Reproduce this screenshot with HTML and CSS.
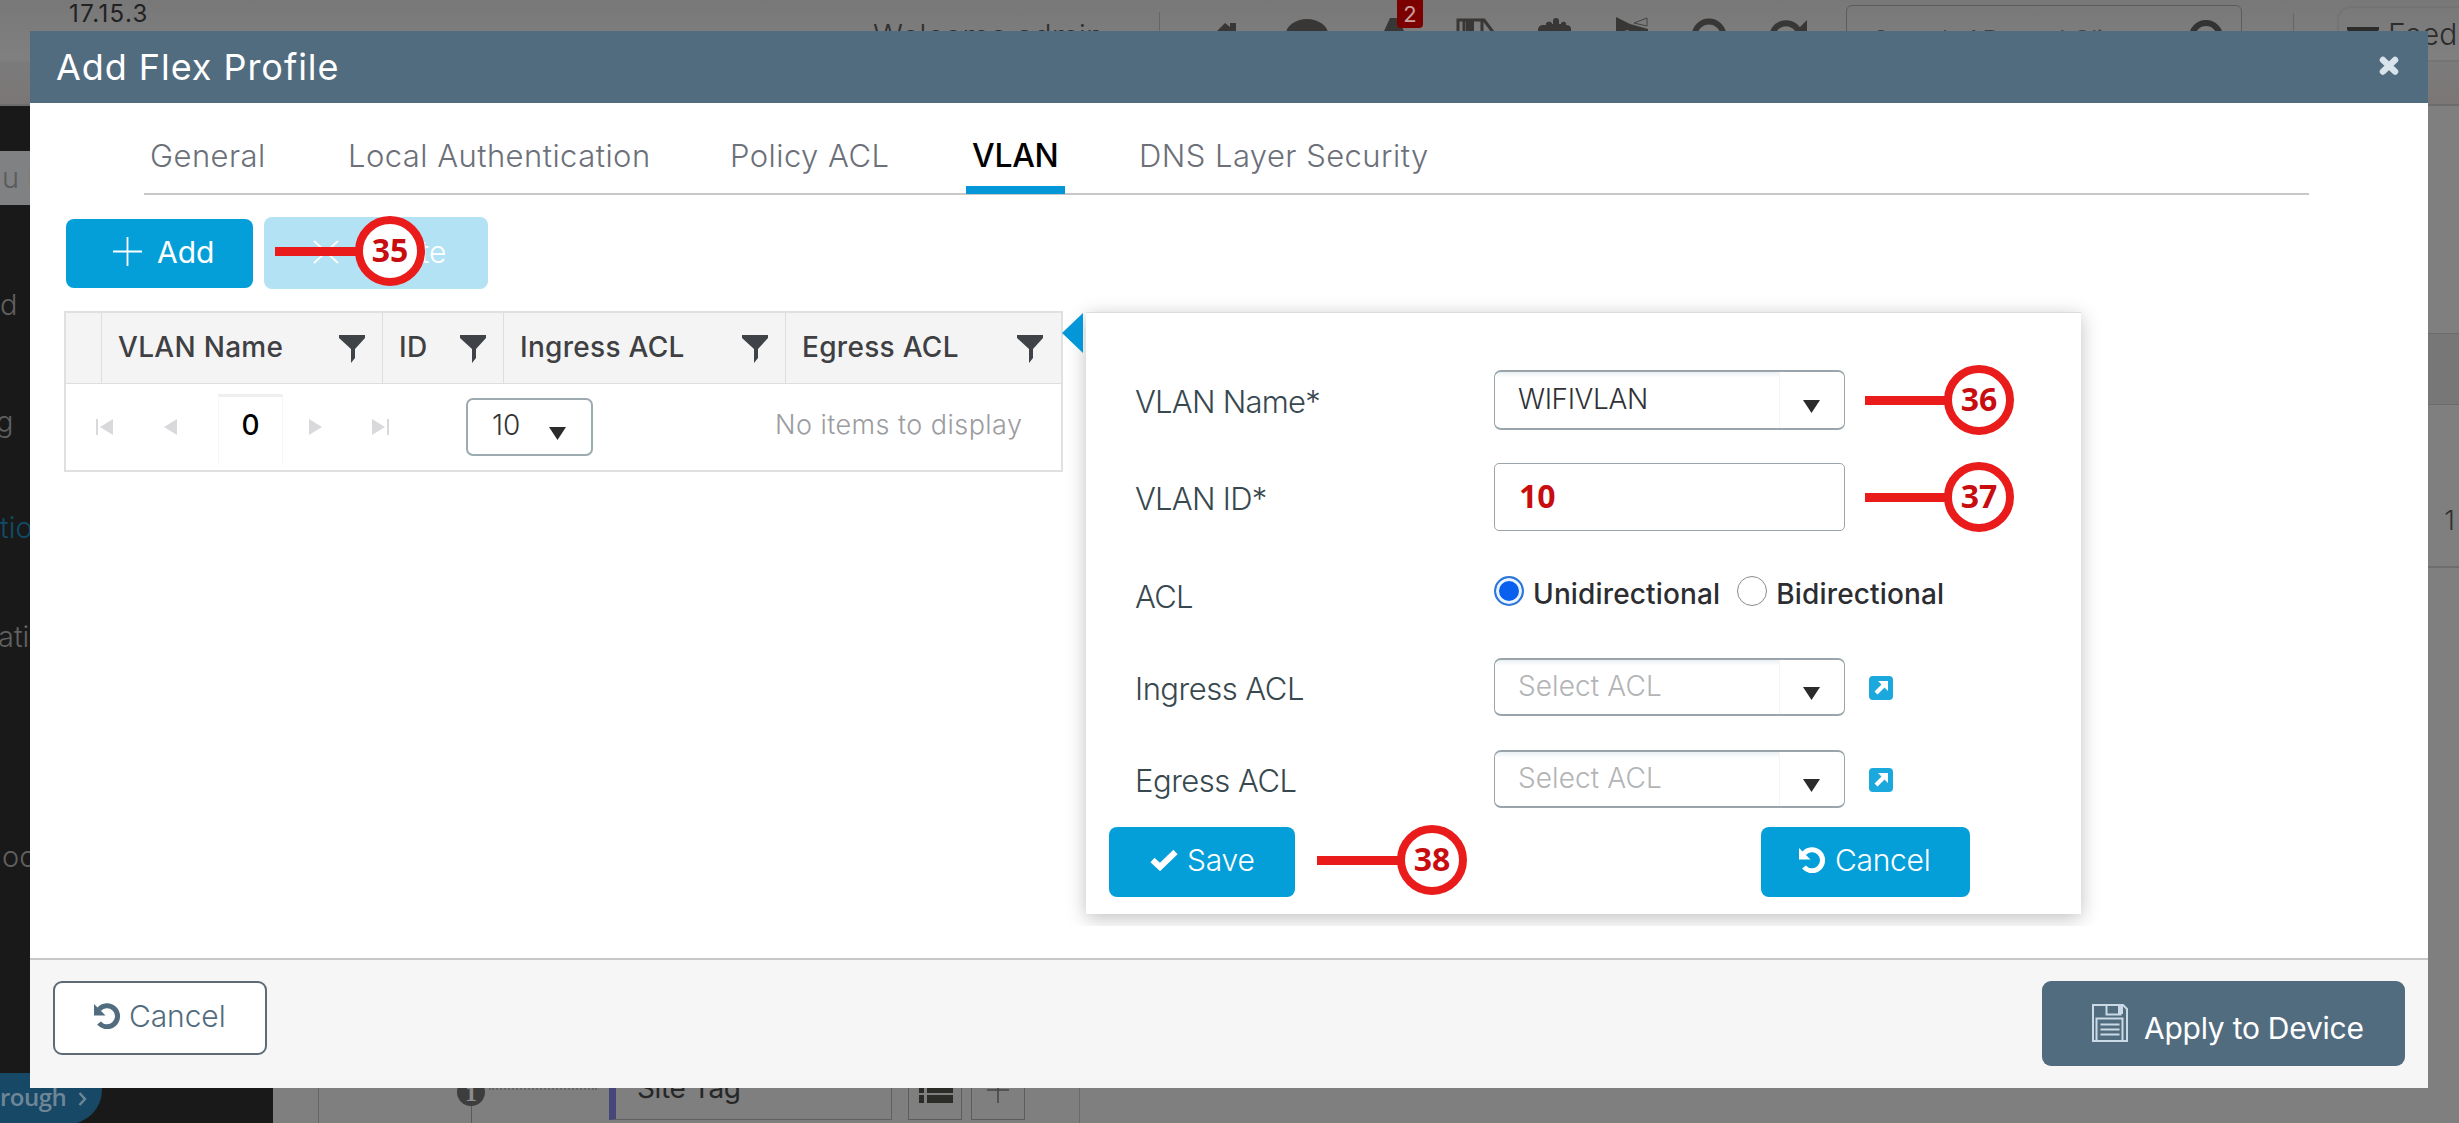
FILE: index.html
```html
<!DOCTYPE html>
<html lang="en">
<head>
<meta charset="utf-8">
<title>Add Flex Profile</title>
<link rel="stylesheet" href="styles.css">
</head>
<body>
<svg class="defs" width="0" height="0">
  <symbol id="funnel" viewBox="0 0 26 28"><path d="M0 0h26v3L16 14v9l-4 5V14L0 3z"/></symbol>
  <symbol id="undo" viewBox="0 0 27 26"><path d="M5 6.5A10.5 10.5 0 1 1 5 20" fill="none" stroke="currentColor" stroke-width="5"/><path d="M0 1v11.500h11.500z" fill="currentColor"/></symbol>
  <symbol id="external" viewBox="0 0 24 24"><rect width="24" height="24" rx="4" fill="#1ba8dc"/><path d="M9 5h10v10l-3.500-3.500-7 7-3-3 7-7z" fill="#fff"/></symbol>
</svg>

<div class="app">
  <header class="topbar">
    <span class="version">17.15.3</span>
    <span class="welcome">Welcome admin</span>
    <svg class="tools" width="620" height="62" viewBox="0 0 620 62">
      <g fill="#383735">
        <path d="M20 38l15-15 5 4v-4h6v15h-5l-6-7-9 7z"/>
        <ellipse cx="117" cy="34" rx="21" ry="15"/>
        <path d="M190 40l10-22h8l10 22z"/>
        <path d="M348 34v-5q1-4 5-4h3v-2q3-3 6 0v1h1v-3q0-3 3-3t3 3v3h2v-1q3-3 5 0v2q5 0 5 4v6z"/>
        <path d="M426 17l14 7 18 5v6h-14l-6-5-12 3z"/>
      </g>
      <path d="M268 40V20h26l9 12M274 20v20M292 20v20" fill="none" stroke="#383735" stroke-width="3"/>
      <path d="M280 20v20" stroke="#383735" stroke-width="8"/>
      <path d="M457 18v8l-13-3z" fill="none" stroke="#444"/>
      <g fill="none" stroke="#383735" stroke-width="6"><circle cx="519" cy="36" r="14.500"/><path d="M582 38a14 14 0 0 1 26-8"/></g>
      <path d="M617 20v14h-14z" fill="#383735"/>
    </svg>
    <span class="notice">2</span>
    <div class="search"><span>Search APs and Clients</span>
      <svg width="36" height="36" viewBox="0 0 36 36"><circle cx="18" cy="18" r="14" fill="none" stroke="#333" stroke-width="6"/></svg>
    </div>
    <div class="feedback"><svg width="32" height="24" viewBox="0 0 32 24"><path d="M0 0h32v3L16 15 0 3z" fill="#2e2c2b"/></svg><span>Feedback</span></div>
  </header>
  <div class="shell">
    <aside class="sidebar">
      <div class="menu-search">u Items</div>
      <span class="item item-d">d</span>
      <span class="item item-g">g</span>
      <span class="item item-tic">tion</span>
      <span class="item item-ati">ation</span>
      <span class="item item-oo">oot</span>
      <span class="walk">rough<svg width="9" height="14" viewBox="0 0 9 14"><path d="M1.500 1l5.500 6-5.500 6" fill="none" stroke="#6f8697" stroke-width="2.500"/></svg></span>
    </aside>
    <main class="page">
      <div class="table-stub"><span class="band"></span><span class="count">1</span></div>
      <div class="flow">
        <div class="step"><b>1</b></div>
        <div class="tag">Site Tag</div>
        <div class="sq"><svg width="34" height="24" viewBox="0 0 34 24"><path d="M0 0h5v6H0zM8 0h26v6H8zM0 8h5v6H0zM8 8h26v6H8zM0 16h5v8H0zM8 16h26v8H8z" fill="#2b2b27"/></svg></div>
        <div class="sq thin"><svg width="22" height="24" viewBox="0 0 22 24"><path d="M0 11h22M11 0v24" stroke="#444" stroke-width="1.500"/></svg></div>
        <div class="edge"></div>
      </div>
    </main>
  </div>
</div>

<section class="modal">
  <header class="modal-head"><h1>Add Flex Profile</h1>
    <svg width="20" height="19" viewBox="0 0 20 19"><path d="M4 4l12 11.500M16 4L4 15.500" stroke="#d9e3ec" stroke-width="6.500" stroke-linecap="round"/></svg>
  </header>
  <div class="modal-body">
    <nav class="tabs">
      <a>General</a><a>Local Authentication</a><a>Policy ACL</a><a class="active">VLAN</a><a>DNS Layer Security</a>
    </nav>
    <div class="actions">
      <button class="btn add"><svg width="29" height="29" viewBox="0 0 29 29"><path d="M0 14.500h29M14.500 0v29" stroke="#fff" stroke-width="1.800"/></svg>Add</button>
      <button class="btn delete"><svg width="26" height="24" viewBox="0 0 26 24"><path d="M1 1l24 22M25 1L1 23" stroke="#fff" stroke-width="1.800"/></svg>Delete</button>
      <div class="callout c35"><i></i><b>35</b></div>
    </div>
    <div class="content">
      <div class="grid">
        <div class="grid-head">
          <div></div>
          <div>VLAN Name<svg width="26" height="28"><use href="#funnel"/></svg></div>
          <div>ID<svg width="26" height="28"><use href="#funnel"/></svg></div>
          <div>Ingress ACL<svg width="26" height="28"><use href="#funnel"/></svg></div>
          <div>Egress ACL<svg width="26" height="28"><use href="#funnel"/></svg></div>
        </div>
        <div class="pager">
          <svg class="first" width="18" height="16" viewBox="0 0 18 16"><path d="M0 0h2v16H0zM17 0v16L4 8z"/></svg>
          <svg class="prev" width="14" height="16" viewBox="0 0 14 16"><path d="M13 0v16L0 8z"/></svg>
          <span class="current">0</span>
          <svg class="next" width="14" height="16" viewBox="0 0 14 16"><path d="M1 0v16l13-8z"/></svg>
          <svg class="last" width="18" height="16" viewBox="0 0 18 16"><path d="M15 0h2v16h-2zM0 0v16l13-8z"/></svg>
          <div class="size">10<svg width="17" height="13" viewBox="0 0 17 13"><path d="M0 0h17l-8.500 13z"/></svg></div>
          <span class="empty">No items to display</span>
        </div>
      </div>
      <div class="panel">
        <div class="row r1"><label>VLAN Name*</label><div class="select">WIFIVLAN<svg width="17" height="13" viewBox="0 0 17 13"><path d="M0 0h17l-8.500 13z"/></svg></div>
          <div class="callout side"><i></i><b>36</b></div></div>
        <div class="row r2"><label>VLAN ID*</label><div class="input">10</div>
          <div class="callout side"><i></i><b>37</b></div></div>
        <div class="row r3"><label>ACL</label><div class="radios"><span class="radio on"></span><span class="opt">Unidirectional</span><span class="radio"></span><span class="opt">Bidirectional</span></div></div>
        <div class="row r4"><label>Ingress ACL</label><div class="select hint">Select ACL<svg width="17" height="13" viewBox="0 0 17 13"><path d="M0 0h17l-8.500 13z"/></svg></div><svg class="link" width="24" height="24"><use href="#external"/></svg></div>
        <div class="row r5"><label>Egress ACL</label><div class="select hint">Select ACL<svg width="17" height="13" viewBox="0 0 17 13"><path d="M0 0h17l-8.500 13z"/></svg></div><svg class="link" width="24" height="24"><use href="#external"/></svg></div>
        <div class="panel-actions">
          <button class="btn save"><svg width="28" height="22" viewBox="0 0 28 22"><path d="M2.500 11l7.500 7L25.500 3" fill="none" stroke="#fff" stroke-width="6"/></svg>Save</button>
          <div class="callout c38"><i></i><b>38</b></div>
          <button class="btn undo"><svg width="27" height="26"><use href="#undo"/></svg>Cancel</button>
        </div>
      </div>
    </div>
  </div>
  <footer class="modal-foot">
    <button class="cancel"><svg width="27" height="26"><use href="#undo"/></svg>Cancel</button>
    <button class="apply"><svg width="36" height="38" viewBox="0 0 36 38"><g fill="none" stroke="#c9d9e6" stroke-width="2"><path d="M1 1h30l4 4v32H1z"/><path d="M4.500 37V14.500h26V37"/><path d="M14.500 1v9.500h14V1"/><path d="M8.500 20.500h19M8.500 25.500h19M8.500 30.500h19"/></g><path d="M26 1h5v9h-5z" fill="#c9d9e6"/></svg>Apply to Device</button>
  </footer>
</section>
</body>
</html>
```
FILE: styles.css
```css
* { box-sizing: border-box; }
body { margin: 0; width: 2459px; height: 1123px; overflow: hidden; position: relative; font-family: Inter, "Liberation Sans", sans-serif; font-weight: 300; }
button { font: inherit; border: 0; padding: 0; margin: 0; }
.defs { position: absolute; }

/* dimmed application behind the dialog */
.app { height: 1123px; background: #7f7f7f; overflow: hidden; color: #303030; }
.topbar { height: 106px; display: flex; align-items: flex-start; background: linear-gradient(#787878, #808080 60px, #7b7b7b 62px, #7b7676); border-bottom: 2px solid #6c6c6c; white-space: nowrap; position: relative; }
.topbar > * { flex: none; }
.version { width: 873px; padding-left: 69px; font-size: 24px; line-height: 28px; letter-spacing: 1.4px; font-weight: 400; color: #222; }
.welcome { width: 287px; margin-top: 12px; height: 60px; border-right: 1px solid #666; font-size: 31px; line-height: 48px; font-weight: 300; }
.tools { margin-left: 30px; }
.notice { position: absolute; left: 1397px; top: 0; width: 26px; height: 28px; border-radius: 0 0 4px 4px; background: #7d0000; color: #c9a0a0; font-size: 22px; line-height: 28px; text-align: center; font-weight: 400; }
.search { margin: 5px 50px 0 36px; width: 396px; height: 60px; border: 1px solid #5c5c5c; border-radius: 6px; display: flex; justify-content: space-between; padding: 13px 17px 0 25px; font-size: 28px; line-height: 44px; letter-spacing: -1px; color: #404040; }
.feedback { border: 2px solid #747474; border-radius: 14px; width: 240px; margin: 6px 0 0 45px; height: 56px; padding: 0 8px; display: flex; align-items: center; gap: 9px; font-size: 30px; color: #2c2c2c; position: relative; }
.feedback svg { margin-top: 9px; }
.feedback::before { content: ""; position: absolute; left: -46px; top: 5px; width: 1px; height: 60px; background: #666; }
.shell { display: flex; height: 1017px; }
.sidebar { width: 273px; background: #191919; color: #606060; font-size: 29px; line-height: 40px; overflow: hidden; display: flex; flex-direction: column; align-items: flex-start; }
.menu-search { margin-top: 45px; width: 240px; height: 54px; line-height: 54px; background: #7f8182; color: #5b5b5b; padding-left: 2px; }
.item-d { margin-top: 80px; }
.item-g { margin: 77px 0 0 -4px; }
.item-tic { margin-top: 66px; color: #104c66; }
.item-ati { margin: 69px 0 0 -2px; }
.item-oo { margin: 180px 0 0 2px; }
.walk { margin-top: 196px; width: 102px; height: 51px; flex: none; border-radius: 0 0 34px 0; background: #174866; color: #6f8697; font-family: "Open Sans", sans-serif; font-weight: 600; font-size: 24px; line-height: 48px; letter-spacing: -.5px; white-space: nowrap; }
.walk svg { margin-left: 12px; }
.page { flex: 1; display: flex; flex-direction: column; }
.table-stub { height: 974px; padding-top: 227px; text-align: right; }
.band { display: block; height: 72px; background: #777; border: 1px solid #6b6b6b; border-width: 1px 0; }
.count { display: block; height: 163px; padding: 97px 4px 0; font-size: 27px; line-height: 38px; border-bottom: 2px solid #6e6e6e; }
.flow { display: flex; height: 43px; margin-left: 45px; border-left: 1px solid #666; }
.flow > * { flex: none; }
.step { width: 290px; background: linear-gradient(#5a5a5a, #5a5a5a) 152px 8px / 1px 40px no-repeat; position: relative; }
.step::after { content: ""; position: absolute; left: 170px; right: 12px; top: 8px; border-top: 2px dotted #666; }
.step b { display: block; width: 28px; height: 28px; margin: -2px 0 0 138px; border-radius: 50%; background: #3d3d3d; color: #8c8c8c; font: 700 24px/30px "Liberation Serif", serif; text-align: center; }
.tag { width: 283px; height: 40px; border: 1px solid #606060; border-left: 7px solid #46467a; padding-left: 21px; font-size: 28px; line-height: 14px; font-weight: 400; letter-spacing: -.4px; color: #272727; }
.sq { width: 54px; height: 40px; border: 1px solid #5c5c5c; margin-left: 16px; padding: 0 0 0 10px; }
.sq svg { display: block; margin-top: -2px; }
.sq.thin { margin-left: 9px; padding-left: 15px; }
.edge { margin-left: 54px; border-left: 1px solid #6a6a6a; }

/* dialog */
.modal { position: absolute; left: 30px; top: 31px; width: 2398px; height: 1057px; background: #fff; display: flex; flex-direction: column; }
.modal-head { height: 72px; background: #526c7f; display: flex; align-items: center; justify-content: space-between; padding: 0 29px 0 26px; color: #fff; }
.modal-head svg { margin-top: -3px; }
h1 { margin: 0; font-size: 36px; font-weight: 400; letter-spacing: .95px; }
.modal-body { flex: 1; }
.tabs { margin-left: 114px; width: 2165px; height: 92px; border-bottom: 2px solid #c6c8ca; display: grid; grid-template-columns: 198px 382px 242px 167px 1fr; font-size: 31px; line-height: 45px; letter-spacing: .450px; color: #6c7079; white-space: nowrap; }
.tabs a { padding: 30px 0 0 6px; height: 91px; justify-self: start; }
.tabs .active { width: 99px; color: #000; font-weight: 500; font-size: 32px; letter-spacing: -.3px; border-bottom: 8px solid #0497d8; }
.actions { display: flex; gap: 11px; align-items: center; padding: 22px 0 0 36px; position: relative; }
.btn { display: flex; align-items: center; background: #049fd9; color: #fff; font-size: 30px; border-radius: 8px; height: 69px; padding-bottom: 3px; font-weight: 300; }
.add { width: 187px; padding-left: 47px; gap: 15px; font-weight: 400; }
.delete { width: 224px; height: 72px; padding-left: 49px; gap: 18px; background: #b3e2f4; }
.callout { position: absolute; display: flex; align-items: center; }
.callout i { height: 9px; width: 85px; margin-right: -5px; background: #ea1b1b; }
.callout b { width: 70px; height: 70px; border: 8px solid #ea1b1b; border-radius: 50%; background: #fff; color: #c80d10; font: 700 32px/52px "Open Sans", "Noto Sans", sans-serif; text-align: center; }
.c35 { left: 245px; top: 21px; }
.content { display: flex; align-items: flex-start; gap: 23px; padding: 22px 0 0 34px; }
.grid { width: 999px; height: 161px; border: 2px solid #dfe0e1; font-size: 28px; }
.grid-head { display: grid; grid-template-columns: 36px 281px 121px 282px 1fr; height: 71px; background: #f4f4f4; border-bottom: 1px solid #dedede; color: #3e4043; font-weight: 500; }
.grid-head div { display: flex; align-items: center; justify-content: space-between; padding: 0 17px 3px 16px; border-right: 1px solid #dedede; letter-spacing: .3px; }
.grid-head div:last-child { border: 0; padding-right: 18px; }
.grid-head svg { fill: #3f4347; margin-top: 5px; }
.pager { display: flex; align-items: center; height: 86px; padding-left: 30px; fill: #d9d9db; color: #333; }
.prev { margin-left: 50px; }
.current { margin: 3px 25px 0 40px; width: 65px; height: 70px; border: 1px solid #f6f6f6; border-top: 3px solid #efefef; border-bottom: 0; text-align: center; line-height: 56px; color: #000; font-weight: 500; }
.last { margin-left: 50px; }
.size { margin-left: 76px; width: 127px; height: 58px; border: 2px solid #9cabb0; border-radius: 7px; display: flex; align-items: center; padding: 0 0 4px 24px; gap: 29px; }
.size svg, .select svg { fill: #2b2b2b; margin-top: 16px; }
.size svg { margin-top: 17px; }
.empty { margin: 0 0 5px 182px; font-size: 27px; color: #9b9c9f; letter-spacing: .450px; white-space: nowrap; }
.panel { width: 995px; height: 602px; margin-top: 1px; background: #fff; border-top: 1px solid #dcdcdc; box-shadow: 0 4px 18px rgba(0,0,0,.25); padding-top: 57px; position: relative; color: #38484f; }
.panel::before { content: ""; position: absolute; left: -24px; top: 0; border: 20px solid transparent; border-left-width: 0; border-right: 21px solid #0497d8; }
.panel::after { content: ""; position: absolute; left: -30px; right: -30px; top: 613px; height: 20px; background: #fff; }
.row { display: flex; align-items: center; padding-left: 50px; position: relative; }
.row label { width: 359px; margin-left: -1px; font-size: 31px; letter-spacing: -.750px; padding-top: 3px; }
.r1 { height: 60px; }
.r2 { height: 68px; margin-top: 33px; }
.r3 { height: 127px; }
.r4, .r5 { height: 58px; }
.r4 label, .r5 label { letter-spacing: -.5px; }
.r5 { margin-top: 34px; }
.select, .input { width: 351px; border: 2px solid #9aa5ab; border-width: 2px 1px; border-radius: 7px; }
.select { height: 100%; display: flex; align-items: center; justify-content: space-between; font-size: 28px; padding: 0 24px 3px 23px; color: #303236; letter-spacing: -.4px; background: linear-gradient(#eaf1f4, #fff 6px) 0 0 / 284px 100% no-repeat, linear-gradient(#f3f5f6, #f3f5f6) 284px 0 / 1px 100% no-repeat, #fff; }
.hint { color: #b2b4b6; letter-spacing: .1px; }
.input { height: 100%; border: 1.500px solid #9aa5ab; border-radius: 5px; padding-left: 24px; font: 700 32px/63px "Open Sans", sans-serif; color: #c80d10; }
.side { left: 779px; top: 50%; transform: translateY(-50%); }
.side i { width: 84px; }
.radios { display: flex; align-items: center; font-size: 28px; font-weight: 500; color: #2b2d31; margin-top: -2px; }
.opt { letter-spacing: .15px; margin: 0 17px 0 9px; }
.radio { width: 30px; height: 30px; border: 1.500px solid #8b8b8b; border-radius: 50%; margin-top: -6px; }
.radio.on { border: 2px solid #2d77d8; background: #0a60ee; box-shadow: inset 0 0 0 3px #e8f4ff; }
.link { margin: 2px 0 0 24px; }
.panel-actions { display: flex; justify-content: space-between; padding: 19px 111px 0 23px; position: relative; }
.panel-actions .btn { height: 70px; padding-bottom: 5px; }
.save { width: 186px; padding-left: 41px; gap: 9px; letter-spacing: -.2px; }
.undo { width: 209px; padding-left: 38px; gap: 9px; letter-spacing: -.3px; }
.c38 { left: 231px; top: 17px; }
.modal-foot { height: 130px; border-top: 2px solid #c5c7c9; background: #f6f6f6; display: flex; justify-content: space-between; align-items: flex-start; padding: 21px 23px 0; }
.cancel { width: 214px; height: 74px; background: #fff; border: 2px solid #5d6b76; border-radius: 9px; display: flex; align-items: center; gap: 8px; padding: 0 0 5px 39px; color: #526c7f; font-size: 30px; letter-spacing: -.1px; }
.apply { width: 363px; height: 85px; background: #526c7f; border-radius: 9px; color: #fff; display: flex; align-items: center; gap: 16px; padding: 9px 0 0 50px; font-size: 30px; letter-spacing: -.25px; font-weight: 400; white-space: nowrap; }
.apply svg { margin-top: -10px; }
```
